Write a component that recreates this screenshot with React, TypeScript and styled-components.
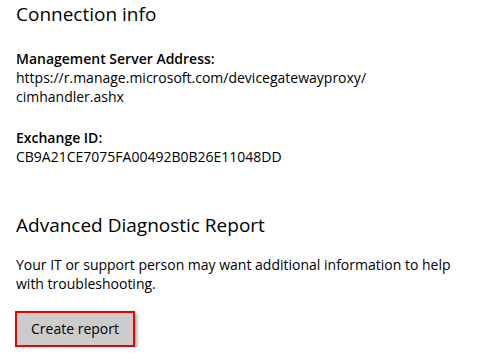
import React from "react";
import styled, { createGlobalStyle } from "styled-components";

const Global = createGlobalStyle`
  html, body { margin: 0; padding: 0; background: #ffffff; }
  body { font-family: "Open Sans", "Noto Sans", sans-serif; color: #000; }
`;

const Page = styled.div`
  padding: 0 16px;
  display: flex;
  flex-direction: column;
`;

const Heading = styled.h2<{ $top: number }>`
  margin: ${(p) => p.$top}px 0 0 0;
  font-size: 19px;
  font-weight: 400;
  line-height: 28px;
  color: #000;
`;

const Field = styled.div<{ $top: number }>`
  margin-top: ${(p) => p.$top}px;
  display: flex;
  flex-direction: column;
  font-size: 14px;
  line-height: 19px;
`;

const Label = styled.span`
  font-weight: 600;
`;

const Value = styled.span`
  font-weight: 400;
`;

const Paragraph = styled.p`
  margin: 16px 0 0 0;
  font-size: 14px;
  line-height: 19px;
  max-width: 462px;
`;

const Button = styled.button`
  margin: 18px 0 0 -1px;
  align-self: flex-start;
  font-family: inherit;
  font-size: 14px;
  color: #000;
  background: #cccccc;
  border: 2px solid #ee0000;
  padding: 0 0 2px 0;
  height: 36px;
  width: 120px;
  box-shadow: 2px 2px 3px rgba(0, 0, 0, 0.35);
`;

export default function App() {
  return (
    <>
      <Global />
      <Page>
        <Heading $top={0}>Connection info</Heading>
        <Field $top={21}>
          <Label>Management Server Address:</Label>
          <Value>https://r.manage.microsoft.com/devicegatewayproxy/</Value>
          <Value>cimhandler.ashx</Value>
        </Field>
        <Field $top={22}>
          <Label>Exchange ID:</Label>
          <Value>CB9A21CE7075FA00492B0B26E11048DD</Value>
        </Field>
        <Heading $top={45}>Advanced Diagnostic Report</Heading>
        <Paragraph>
          Your IT or support person may want additional information to help with troubleshooting.
        </Paragraph>
        <Button>Create report</Button>
      </Page>
    </>
  );
}
